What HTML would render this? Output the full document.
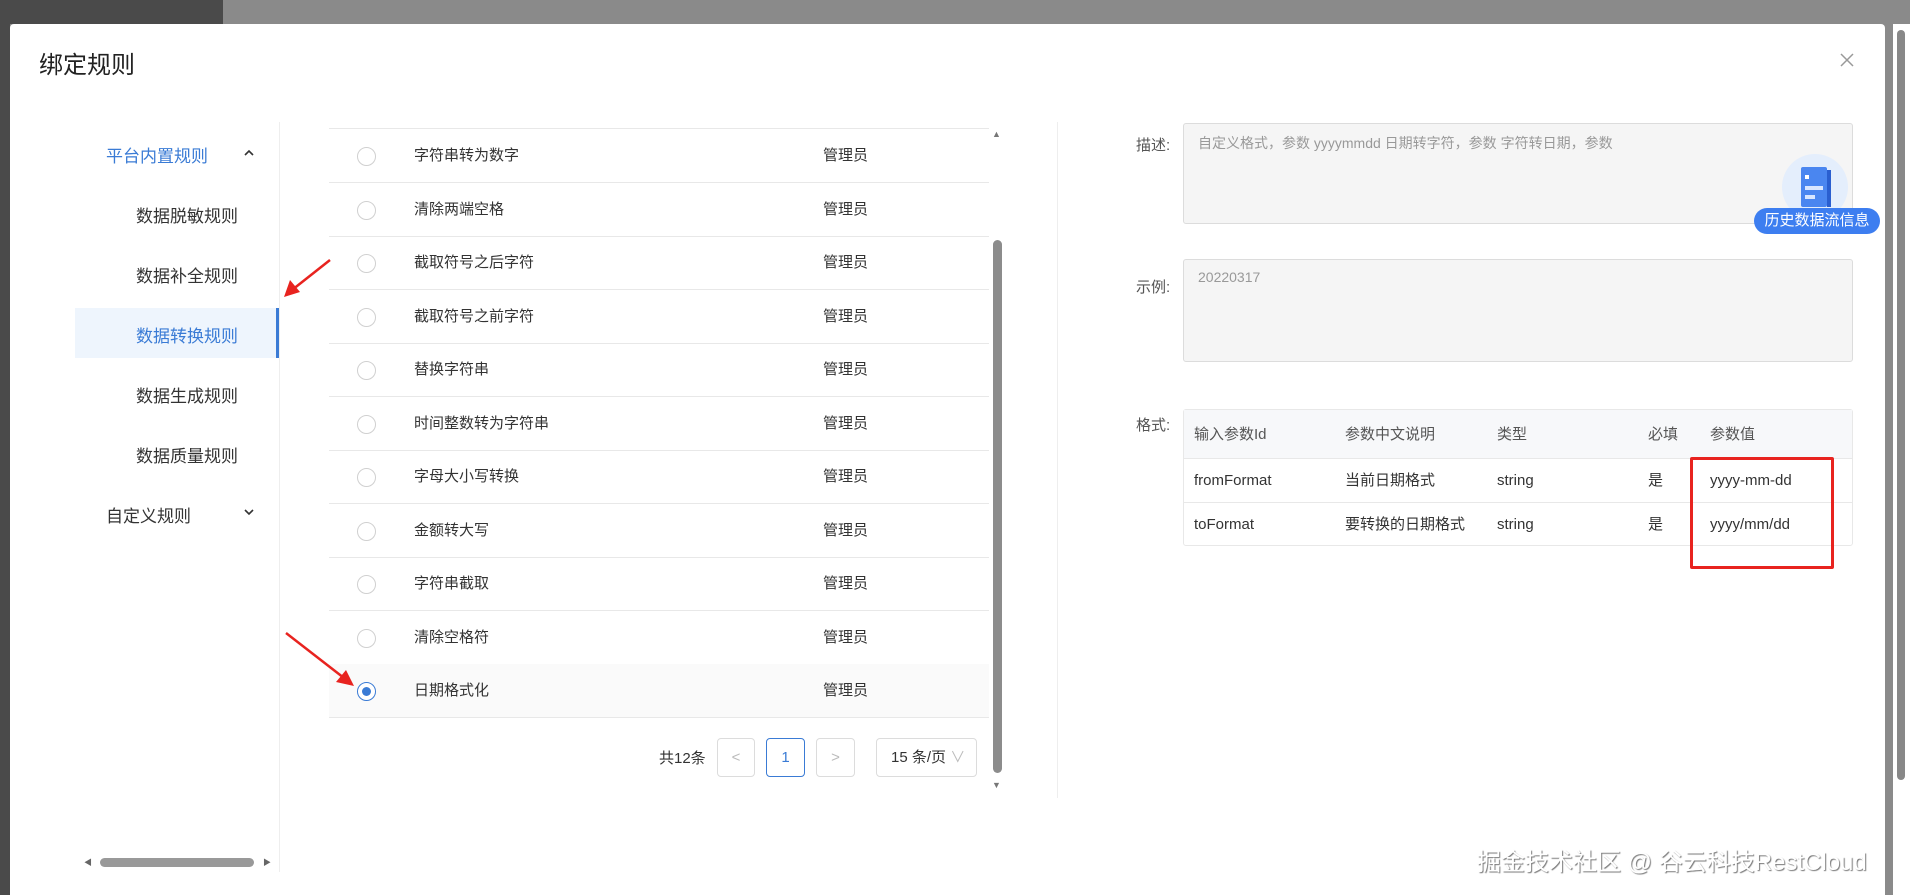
<!DOCTYPE html>
<html><head><meta charset="utf-8"><style>
*{box-sizing:border-box;margin:0;padding:0}
body{width:1910px;height:895px;position:relative;overflow:hidden;background:#8a8a8a;font-family:"Liberation Sans","Noto Sans CJK SC",sans-serif;color:#333}
.a{position:absolute}
.row{position:absolute;left:329px;width:660px;height:54px;border-bottom:1px solid #e8e8e8;font-size:15px;color:#333}
.row .r{position:absolute;left:28px;top:18px;width:19px;height:19px;border:1px solid #d0d0d0;border-radius:50%;background:#fff}
.row .t{position:absolute;left:85px;top:0;line-height:53px}
.row .m{position:absolute;left:494px;top:0;line-height:53px}
.mi{position:absolute;left:136px;font-size:17px;color:#333}
.pb{position:absolute;top:738px;height:39px;border:1px solid #dcdcdc;border-radius:4px;background:#fff;text-align:center;line-height:37px;font-size:15px;color:#bbb}
.lbl{position:absolute;left:1136px;font-size:15px;color:#555}
.ta{position:absolute;left:1183px;width:670px;background:#f5f5f5;border:1px solid #dcdcdc;border-radius:3px;font-size:14px;color:#999;padding:9px 14px}
.c{position:absolute;font-size:15px;color:#333;line-height:20px;height:20px}
</style></head><body>
<div class="a" style="left:0;top:0;width:223px;height:24px;background:#4a4a4a"></div>
<div class="a" style="left:0;top:0;width:10px;height:895px;background:#4a4a4a"></div>
<div class="a" style="left:1893px;top:24px;width:17px;height:871px;background:#fff"></div>
<div class="a" style="left:1897px;top:30px;width:8px;height:750px;background:#888;border-radius:4px"></div>
<div class="a" style="left:10px;top:24px;width:1875px;height:871px;background:#fff;border-radius:4px 4px 0 0"></div>
<div class="a" style="left:39px;top:45px;font-size:24px;color:#222">绑定规则</div>
<svg class="a" style="left:1840px;top:53px" width="14" height="14"><path d="M1 1L13 13M13 1L1 13" stroke="#999" stroke-width="1.5"/></svg>

<div class="a" style="left:106px;top:142px;font-size:17px;color:#3a7bd5">平台内置规则</div>
<svg class="a" style="left:244px;top:149px" width="10" height="7"><path d="M1 6L5 2L9 6" stroke="#333" stroke-width="1.6" fill="none"/></svg>
<div class="a" style="left:75px;top:308px;width:203px;height:50px;background:#eef5fd"></div>
<div class="a" style="left:276px;top:308px;width:3px;height:50px;background:#3a7bd5"></div>
<div class="mi" style="top:202px">数据脱敏规则</div>
<div class="mi" style="top:262px">数据补全规则</div>
<div class="mi" style="top:322px;color:#3a7bd5">数据转换规则</div>
<div class="mi" style="top:382px">数据生成规则</div>
<div class="mi" style="top:442px">数据质量规则</div>
<div class="a" style="left:106px;top:502px;font-size:17px;color:#333">自定义规则</div>
<svg class="a" style="left:244px;top:509px" width="10" height="7"><path d="M1 1L5 5L9 1" stroke="#333" stroke-width="1.6" fill="none"/></svg>
<div class="a" style="left:279px;top:122px;width:1px;height:750px;background:#eee"></div>
<div class="a" style="left:100px;top:858px;width:154px;height:9px;background:#999;border-radius:5px"></div>
<div class="a" style="left:84px;top:857px;font-size:8px;color:#666">◀</div>
<div class="a" style="left:263px;top:857px;font-size:8px;color:#666">▶</div>

<div class="a" style="left:329px;top:128px;width:660px;height:1px;background:#e8e8e8"></div>
<div class="row" style="top:129px"><div class="r"></div><div class="t">字符串转为数字</div><div class="m">管理员</div></div>
<div class="row" style="top:183px"><div class="r"></div><div class="t">清除两端空格</div><div class="m">管理员</div></div>
<div class="row" style="top:236px"><div class="r"></div><div class="t">截取符号之后字符</div><div class="m">管理员</div></div>
<div class="row" style="top:290px"><div class="r"></div><div class="t">截取符号之前字符</div><div class="m">管理员</div></div>
<div class="row" style="top:343px"><div class="r"></div><div class="t">替换字符串</div><div class="m">管理员</div></div>
<div class="row" style="top:397px"><div class="r"></div><div class="t">时间整数转为字符串</div><div class="m">管理员</div></div>
<div class="row" style="top:450px"><div class="r"></div><div class="t">字母大小写转换</div><div class="m">管理员</div></div>
<div class="row" style="top:504px"><div class="r"></div><div class="t">金额转大写</div><div class="m">管理员</div></div>
<div class="row" style="top:557px"><div class="r"></div><div class="t">字符串截取</div><div class="m">管理员</div></div>
<div class="row" style="top:611px"><div class="r"></div><div class="t">清除空格符</div><div class="m">管理员</div></div>
<div class="row" style="top:664px;background:#fafafa"><div class="r" style="border-color:#3a7bd5"><div style="position:absolute;left:4px;top:4px;width:9px;height:9px;border-radius:50%;background:#3a7bd5"></div></div><div class="t">日期格式化</div><div class="m">管理员</div></div>
<div class="a" style="left:993px;top:240px;width:9px;height:533px;background:#8c8c8c;border-radius:5px"></div>
<div class="a" style="left:992px;top:129px;font-size:9px;color:#777">▲</div>
<div class="a" style="left:992px;top:780px;font-size:9px;color:#777">▼</div>

<div class="a" style="left:659px;top:747px;font-size:15px;color:#333">共12条</div>
<div class="pb" style="left:717px;width:38px">&lt;</div>
<div class="pb" style="left:766px;width:39px;border-color:#3a7bd5;color:#3a7bd5">1</div>
<div class="pb" style="left:816px;width:39px">&gt;</div>
<div class="pb" style="left:876px;width:101px;color:#333;text-align:left;padding-left:14px">15 条/页<span style="color:#bbb"> ∨</span></div>
<div class="a" style="left:1057px;top:122px;width:1px;height:676px;background:#eee"></div>

<div class="lbl" style="top:134px">描述:</div>
<div class="ta" style="top:123px;height:101px">自定义格式，参数 yyyymmdd 日期转字符，参数 字符转日期，参数</div>
<div class="lbl" style="top:276px">示例:</div>
<div class="ta" style="top:259px;height:103px">20220317</div>
<div class="lbl" style="top:414px">格式:</div>
<div class="a" style="left:1183px;top:409px;width:670px;height:137px;border:1px solid #e8e8e8;border-radius:3px"></div>
<div class="a" style="left:1184px;top:410px;width:668px;height:49px;background:#f7f8fa;border-bottom:1px solid #e8e8e8"></div>
<div class="a" style="left:1184px;top:502px;width:668px;height:1px;background:#e8e8e8"></div>
<div class="c" style="left:1194px;top:425px;color:#555">输入参数Id</div>
<div class="c" style="left:1345px;top:425px;color:#555">参数中文说明</div>
<div class="c" style="left:1497px;top:425px;color:#555">类型</div>
<div class="c" style="left:1648px;top:425px;color:#555">必填</div>
<div class="c" style="left:1710px;top:425px;color:#555">参数值</div>
<div class="c" style="left:1194px;top:471px">fromFormat</div>
<div class="c" style="left:1345px;top:471px">当前日期格式</div>
<div class="c" style="left:1497px;top:471px">string</div>
<div class="c" style="left:1648px;top:471px">是</div>
<div class="c" style="left:1710px;top:471px">yyyy-mm-dd</div>
<div class="c" style="left:1194px;top:515px">toFormat</div>
<div class="c" style="left:1345px;top:515px">要转换的日期格式</div>
<div class="c" style="left:1497px;top:515px">string</div>
<div class="c" style="left:1648px;top:515px">是</div>
<div class="c" style="left:1710px;top:515px">yyyy/mm/dd</div>
<div class="a" style="left:1690px;top:457px;width:144px;height:112px;border:3px solid #e8231f;border-radius:2px"></div>

<div class="a" style="left:1782px;top:154px;width:66px;height:66px;border-radius:50%;background:#e4eefc"></div>
<div class="a" style="left:1801px;top:167px;width:26px;height:40px;background:#4a86f0;border-radius:2px"></div>
<div class="a" style="left:1827px;top:170px;width:4px;height:37px;background:#2a5fd0"></div>
<div class="a" style="left:1805px;top:175px;width:4px;height:4px;background:#fff"></div>
<div class="a" style="left:1805px;top:186px;width:18px;height:4px;background:#d8e6ff"></div>
<div class="a" style="left:1805px;top:195px;width:10px;height:4px;background:#d8e6ff"></div>
<div class="a" style="left:1754px;top:208px;width:126px;height:26px;background:#3d7ef0;border-radius:13px;color:#fff;font-size:15px;text-align:center;line-height:26px">历史数据流信息</div>

<svg class="a" style="left:0;top:0" width="1910" height="895">
<line x1="330" y1="260" x2="292" y2="290" stroke="#e8231f" stroke-width="2.5"/>
<polygon points="284,297 290,280 300,292" fill="#e8231f"/>
<line x1="286" y1="633" x2="344" y2="678" stroke="#e8231f" stroke-width="2.5"/>
<polygon points="354,686 336,682 346,670" fill="#e8231f"/>
</svg>
<div class="a" style="left:1477px;top:842px;font-size:24px;color:#fff;text-shadow:1px 1px 1px #777;white-space:nowrap">掘金技术社区 @ 谷云科技RestCloud</div>
</body></html>
